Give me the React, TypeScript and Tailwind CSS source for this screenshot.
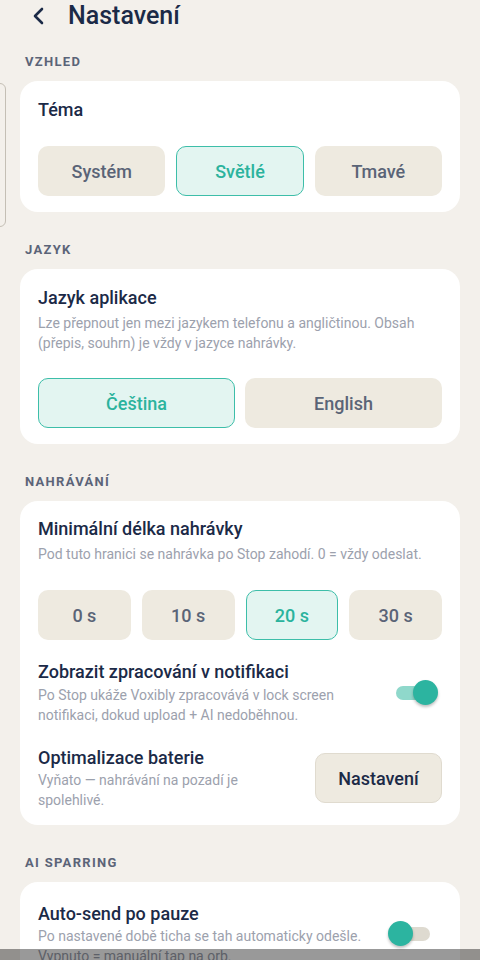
import React, { useState } from 'react';

const navy = 'text-[#1b2a47]';

function SectionLabel({ children, first = false }: { children: React.ReactNode; first?: boolean }) {
  return (
    <div
      className={`${first ? 'mt-[22px]' : 'mt-[30px]'} mb-[11px] px-[25px] text-[13px] leading-4 font-bold tracking-[0.1em] text-[#5b6478]`}
    >
      {children}
    </div>
  );
}

function Chip({ label, selected, onClick }: { label: string; selected: boolean; onClick: () => void }) {
  return (
    <button
      onClick={onClick}
      className={`h-[50px] rounded-[10px] text-[18px] font-medium ${
        selected
          ? 'bg-[#e3f5f1] border-[1.5px] border-[#3dbea9] text-[#2bb39d]'
          : 'bg-[#eeeae0] border-[1.5px] border-transparent text-[#5a6477]'
      }`}
    >
      {label}
    </button>
  );
}

function Toggle({ on, onClick }: { on: boolean; onClick: () => void }) {
  return (
    <button onClick={onClick} className="relative shrink-0 w-[34px] h-[14px] mr-[12px]">
      <span className={`absolute inset-0 rounded-full ${on ? 'bg-[#8fd8cb]' : 'bg-[#dedad0]'}`} />
      <span
        className={`absolute top-[-6px] w-[25px] h-[25px] rounded-full bg-[#2cb4a0] shadow-[0_2px_3px_rgba(0,0,0,0.25)] ${
          on ? 'left-[17px]' : 'left-[-8px]'
        }`}
      />
    </button>
  );
}

export default function App() {
  const [theme, setTheme] = useState('light');
  const [lang, setLang] = useState('cs');
  const [minLen, setMinLen] = useState(20);
  const [notif, setNotif] = useState(true);
  const [autoSend, setAutoSend] = useState(false);

  return (
    <div className="relative h-[960px] overflow-hidden bg-[#f3f0eb] font-['Roboto','Noto_Sans',sans-serif]">
      {/* peeking drawer edge */}
      <div className="absolute left-[-12px] top-[83px] w-[18px] h-[144px] rounded-md border border-[#c4bfb5]" />

      {/* Header */}
      <div className="flex items-center h-[32px]">
        <button className="ml-[30px] w-[16px] h-[20px] flex items-center justify-center">
          <svg width="14" height="18" viewBox="0 0 14 18" fill="none">
            <path d="M11 2 L4 9 L11 16" stroke="#1b2a47" strokeWidth="2.6" strokeLinecap="round" strokeLinejoin="round" />
          </svg>
        </button>
        <h1 className={`ml-[22px] text-[25px] leading-8 font-medium ${navy}`}>Nastavení</h1>
      </div>

      <SectionLabel first>VZHLED</SectionLabel>
      <div className="mx-[20px] rounded-[18px] bg-white px-[18px] pt-[17px] pb-[16px]">
        <div className={`text-[18px] leading-6 font-medium ${navy}`}>Téma</div>
        <div className="mt-[24px] grid grid-cols-3 gap-[11px]">
          <Chip label="Systém" selected={theme === 'system'} onClick={() => setTheme('system')} />
          <Chip label="Světlé" selected={theme === 'light'} onClick={() => setTheme('light')} />
          <Chip label="Tmavé" selected={theme === 'dark'} onClick={() => setTheme('dark')} />
        </div>
      </div>

      <SectionLabel>JAZYK</SectionLabel>
      <div className="mx-[20px] rounded-[18px] bg-white px-[18px] pt-[17px] pb-[16px]">
        <div className={`text-[18px] leading-6 font-medium ${navy}`}>Jazyk aplikace</div>
        <p className="mt-[3px] text-[14px] leading-5 text-[#9ca1ad]">
          Lze přepnout jen mezi jazykem telefonu a angličtinou. Obsah (přepis, souhrn) je vždy v jazyce nahrávky.
        </p>
        <div className="mt-[25px] grid grid-cols-2 gap-[10px]">
          <Chip label="Čeština" selected={lang === 'cs'} onClick={() => setLang('cs')} />
          <Chip label="English" selected={lang === 'en'} onClick={() => setLang('en')} />
        </div>
      </div>

      <SectionLabel>NAHRÁVÁNÍ</SectionLabel>
      <div className="mx-[20px] rounded-[18px] bg-white px-[18px] pt-[16px] pb-[15px]">
        <div className={`text-[18px] leading-6 font-medium ${navy}`}>Minimální délka nahrávky</div>
        <p className="mt-[3px] text-[14px] leading-5 text-[#9ca1ad]">
          Pod tuto hranici se nahrávka po Stop zahodí. 0 = vždy odeslat.
        </p>
        <div className="mt-[26px] grid grid-cols-4 gap-[11px]">
          {[0, 10, 20, 30].map((s) => (
            <Chip key={s} label={`${s} s`} selected={minLen === s} onClick={() => setMinLen(s)} />
          ))}
        </div>

        <div className="mt-[20px] flex items-center gap-[16px]">
          <div className="flex-1">
            <div className={`text-[18px] leading-6 font-medium ${navy}`}>Zobrazit zpracování v notifikaci</div>
            <p className="mt-[1px] pr-[2px] text-[14px] leading-5 text-[#9ca1ad]">
              Po Stop ukáže Voxibly zpracovává v lock screen notifikaci, dokud upload + AI nedoběhnou.
            </p>
          </div>
          <Toggle on={notif} onClick={() => setNotif(!notif)} />
        </div>

        <div className="mt-[21px] flex items-center gap-[16px]">
          <div className="flex-1">
            <div className={`text-[18px] leading-6 font-medium ${navy}`}>Optimalizace baterie</div>
            <p className="text-[14px] leading-5 text-[#9ca1ad]">Vyňato — nahrávání na pozadí je spolehlivé.</p>
          </div>
          <button
            className={`w-[127px] h-[50px] shrink-0 rounded-[10px] bg-[#eeeae0] border border-[#e0dbcf] text-[18px] font-medium ${navy}`}
          >
            Nastavení
          </button>
        </div>
      </div>

      <SectionLabel>AI SPARRING</SectionLabel>
      <div className="mx-[20px] rounded-[18px] bg-white px-[18px] pt-[20px] pb-[16px]">
        <div className="flex items-center gap-[16px]">
          <div className="flex-1">
            <div className={`text-[18px] leading-6 font-medium ${navy}`}>Auto-send po pauze</div>
            <p className="text-[14px] leading-5 text-[#9ca1ad]">
              Po nastavené době ticha se tah automaticky odešle. Vypnuto = manuální tap na orb.
            </p>
          </div>
          <Toggle on={autoSend} onClick={() => setAutoSend(!autoSend)} />
        </div>
      </div>

      {/* system navigation bar scrim */}
      <div className="fixed bottom-0 inset-x-0 h-[11px] bg-black/40" />
    </div>
  );
}
